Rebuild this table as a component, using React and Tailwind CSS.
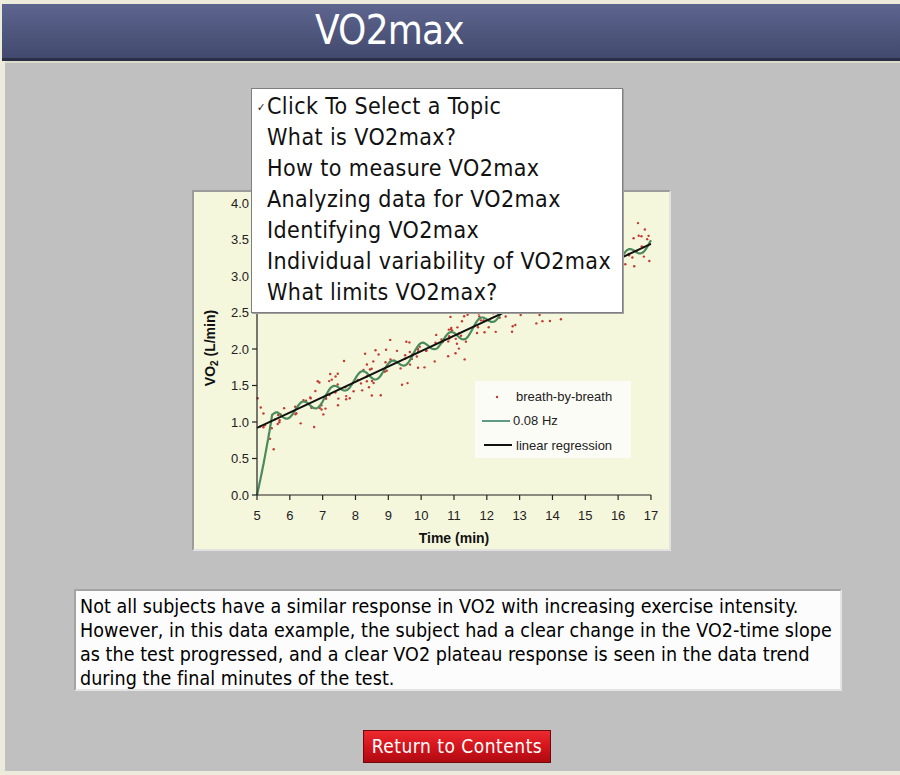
import React from 'react';

const topics = [
  'Click To Select a Topic',
  'What is VO2max?',
  'How to measure VO2max',
  'Analyzing data for VO2max',
  'Identifying VO2max',
  'Individual variability of VO2max',
  'What limits VO2max?',
];

const noteLines = [
  'Not all subjects have a similar response in VO2 with increasing exercise intensity.',
  'However, in this data example, the subject had a clear change in the VO2-time slope',
  'as the test progressed, and a clear VO2 plateau response is seen in the data trend',
  'during the final minutes of the test.',
];

// chart scale (inside the framed box)
const X = (t) => 63 + (t - 5) * 32.83;
const Y = (v) => 303 - v * 73;
const reg = (t) => 0.92 + (t - 5) * 0.21;

function rng(seed) {
  let a = seed;
  return () => {
    a |= 0;
    a = (a + 0x6d2b79f5) | 0;
    let t = Math.imul(a ^ (a >>> 15), 1 | a);
    t = (t + Math.imul(t ^ (t >>> 7), 61 | t)) ^ t;
    return ((t ^ (t >>> 14)) >>> 0) / 4294967296;
  };
}

const rand = rng(42);
const dots = [];
for (let i = 0; i < 240; i++) {
  const t = 5 + rand() * 12;
  const g = (rand() + rand() + rand() - 1.5) * 0.34;
  dots.push([t, reg(t) + g]);
}

function smooth(t) {
  if (t < 5.45) {
    const k = (t - 5) / 0.45;
    return 1.06 * (k * 0.85 + 0.15 * k * k);
  }
  const osc =
    0.085 * Math.sin((2 * Math.PI * (t - 5.45)) / 0.9 + 1.3) +
    0.03 * Math.sin((2 * Math.PI * (t - 5)) / 2.3);
  const blend = Math.min(1, (t - 5.45) / 0.25);
  return reg(t) + 0.08 * (1 - blend) + osc * blend;
}

const greenPts = [];
for (let t = 5; t <= 17.001; t += 0.02) {
  greenPts.push(`${X(t).toFixed(1)},${Y(smooth(t)).toFixed(1)}`);
}

function Chart() {
  const xs = [5, 6, 7, 8, 9, 10, 11, 12, 13, 14, 15, 16, 17];
  const ys = [0, 0.5, 1, 1.5, 2, 2.5, 3, 3.5, 4];
  const font = "'Liberation Sans', Arial, sans-serif";
  return (
    <svg width="475" height="357" viewBox="0 0 475 357">
      {dots.map(([t, v], i) => (
        <circle key={i} cx={X(t)} cy={Y(v)} r="1.2" fill="#c23a32" />
      ))}
      <polyline points={greenPts.join(' ')} fill="none" stroke="#4b8a5a" strokeWidth="2.2" />
      <line x1={X(5)} y1={Y(reg(5))} x2={X(17)} y2={Y(reg(17))} stroke="#111" strokeWidth="2" />
      {/* axes */}
      <line x1="63" y1={Y(4)} x2="63" y2="303" stroke="#222" strokeWidth="1.2" />
      <line x1="63" y1="303" x2={X(17)} y2="303" stroke="#222" strokeWidth="1.2" />
      {xs.map((t) => (
        <g key={t}>
          <line x1={X(t)} y1="303" x2={X(t)} y2="308" stroke="#222" strokeWidth="1.2" />
          <text x={X(t)} y="328" textAnchor="middle" fontSize="13" fill="#222" fontFamily={font}>
            {t}
          </text>
        </g>
      ))}
      {ys.map((v) => (
        <g key={v}>
          <line x1="58" y1={Y(v)} x2="63" y2={Y(v)} stroke="#222" strokeWidth="1.2" />
          <text x="55" y={Y(v) + 4.5} textAnchor="end" fontSize="13" fill="#222" fontFamily={font}>
            {v.toFixed(1)}
          </text>
        </g>
      ))}
      <text
        transform="translate(21 156) rotate(-90)"
        textAnchor="middle"
        fontSize="14"
        fontWeight="bold"
        fill="#111"
        fontFamily={font}
      >
        VO<tspan fontSize="10" dy="3">2</tspan>
        <tspan dy="-3"> (L/min)</tspan>
      </text>
      <text x="260" y="351" textAnchor="middle" fontSize="14" fontWeight="bold" fill="#111" fontFamily={font}>
        Time (min)
      </text>
      {/* legend */}
      <rect x="281" y="189" width="156" height="77" fill="#fcfcf6" />
      <circle cx="303" cy="205" r="1.2" fill="#c23a32" />
      <text x="322" y="209" fontSize="13" fill="#222" fontFamily={font}>breath-by-breath</text>
      <line x1="288" y1="229" x2="316" y2="229" stroke="#5f9a86" strokeWidth="2" />
      <text x="319" y="233" fontSize="13" fill="#222" fontFamily={font}>0.08 Hz</text>
      <line x1="290" y1="253" x2="318" y2="253" stroke="#111" strokeWidth="2" />
      <text x="322" y="258" fontSize="13" fill="#222" fontFamily={font}>linear regression</text>
    </svg>
  );
}

export default function App() {
  const tahoma = "font-['DejaVu_Sans_Condensed','DejaVu_Sans',Verdana,sans-serif]";
  return (
    <div className={`w-[900px] h-[775px] bg-[#ecebdc] pt-[4px] flex flex-col overflow-hidden ${tahoma}`}>
      <div className="ml-[2px] h-[57px] shrink-0 bg-gradient-to-b from-[#5e6690] via-[#50577e] to-[#434a6e] border-b-[3px] border-[#2b2f46] flex items-center pl-[313px]">
        <h1 className="text-white text-[40px] leading-none tracking-[-0.8px] -mt-[2px]">VO2max</h1>
      </div>
      <div className="relative ml-[5px] mb-[4px] flex-1 bg-[#c0c0c0] border-t-2 border-[#dcdccc] flex flex-col">
        <div className="mt-[127px] ml-[187px] w-[479px] h-[361px] border-2 border-t-[#9c9c9c] border-l-[#9c9c9c] border-b-[#e2e2e2] border-r-[#e2e2e2] bg-[#f5f7dd]">
          <Chart />
        </div>

        <div className="mt-[38px] ml-[69px] w-[768px] h-[102px] border-2 border-t-[#a3a3a3] border-l-[#a3a3a3] border-b-[#e4e4e4] border-r-[#e4e4e4] bg-[#fcfcfc] pl-[4px] pr-[2px] pt-[4px] text-[19.5px] leading-[24px] tracking-[0.05px] text-black">
          {noteLines.map((l) => (
            <div key={l} className="whitespace-nowrap">{l}</div>
          ))}
        </div>

        <div className="mt-[39px] ml-[358px]">
          <button className="w-[188px] h-[33px] bg-gradient-to-b from-[#ec2a2f] via-[#d4141c] to-[#b00a12] border border-[#6e0a0a] text-white text-[19px] leading-none tracking-[0.5px]">
            Return to Contents
          </button>
        </div>

        {/* open topic menu */}
        <div className="absolute left-[246px] top-[25px] w-[372px] bg-white border border-[#7f7f7f] shadow-[1px_1px_0_#a0a0a0] pt-[2px] pb-[4px]">
          {topics.map((t, i) => (
            <div key={t} className="relative pl-[15px] h-[31px] text-[23px] leading-[31px] text-[#111] tracking-[0.4px] whitespace-nowrap">
              {i === 0 && <span className="absolute left-[5px] top-[1px] text-[11px]">✓</span>}
              {t}
            </div>
          ))}
        </div>
      </div>
    </div>
  );
}
